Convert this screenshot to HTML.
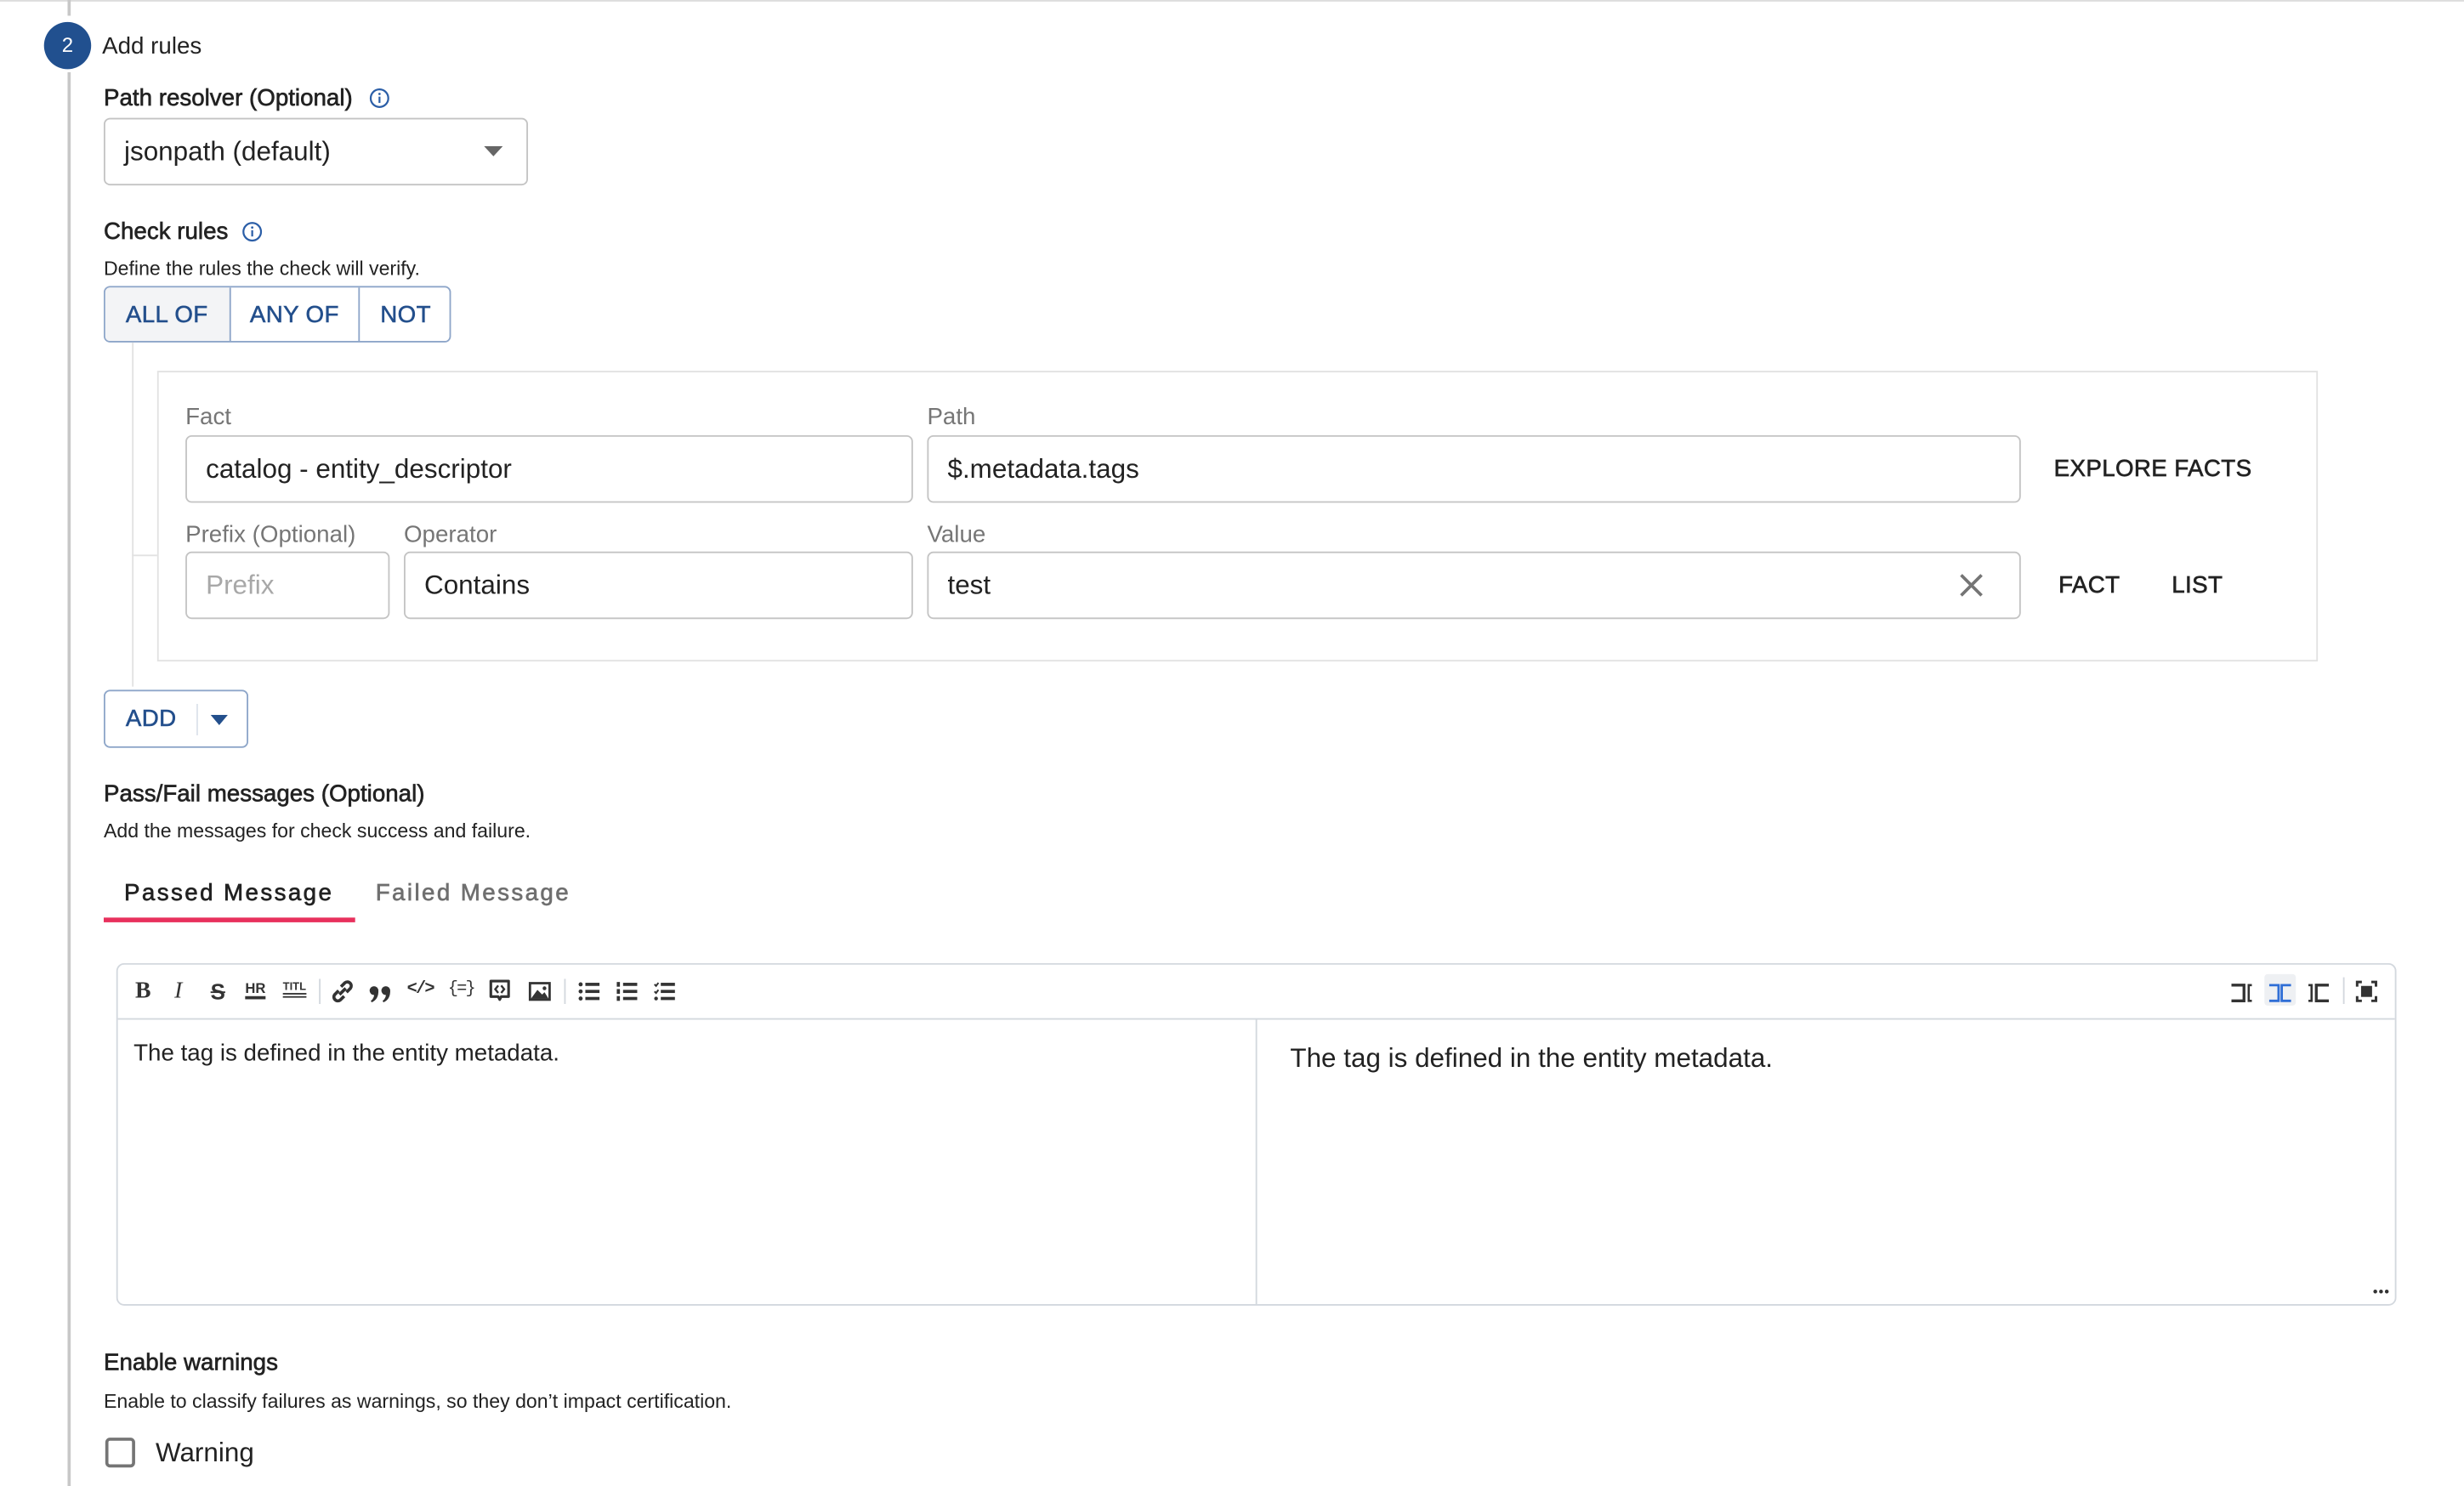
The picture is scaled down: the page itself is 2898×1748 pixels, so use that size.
<!DOCTYPE html>
<html><head><meta charset="utf-8">
<style>
html,body{margin:0;padding:0;background:#fff;overflow:hidden;width:2898px;height:1736px}
#w{position:absolute;left:0;top:0;width:1568px;height:940px;transform:scale(1.84821);transform-origin:0 0;font-family:"Liberation Sans",Arial,sans-serif;color:#1f1f1f}
.a{position:absolute;white-space:nowrap}
.t{height:20px;line-height:20px;margin-top:1px}
.h{font-size:15px;color:#222;-webkit-text-stroke:0.35px #222}
.s{font-size:12.5px;color:#222}
.lbl{font-size:15px;color:#767676}
.box{position:absolute;border:1px solid #c4c4c4;border-radius:4px;box-sizing:border-box;background:#fff}
.in{font-size:17px;color:#222;position:absolute;left:12px;top:50%;transform:translateY(-50%)}
.btn{position:absolute;font-size:15px;color:#222;height:20px;line-height:20px;letter-spacing:.2px;margin-top:1px;-webkit-text-stroke:0.35px #222}
.blue{color:#234f8c;-webkit-text-stroke:0.3px #234f8c}
.tb{position:absolute;top:623px;height:16px}
</style></head><body><div id="w">
<div class="a" style="left:0;top:0;width:1568px;height:1px;background:#dcdcdc"></div>
<div class="a" style="left:43px;top:0;width:1.5px;height:10px;background:#c8c8c8"></div>
<div class="a" style="left:43px;top:46px;width:1.5px;height:900px;background:#c8c8c8"></div>
<div class="a" style="left:28px;top:14px;width:30px;height:30px;border-radius:50%;background:#21508f;color:#fff;font-size:13px;line-height:30px;text-align:center">2</div>
<div class="a t" style="left:65px;top:19px;font-size:15px;color:#222">Add rules</div>

<div class="a t h" style="left:66px;top:52px">Path resolver (Optional)</div>
<svg class="a" style="left:235px;top:56px" width="13" height="13" viewBox="0 0 13 13"><circle cx="6.5" cy="6.5" r="5.6" fill="none" stroke="#2b5ea7" stroke-width="1.2"/><rect x="5.9" y="5.5" width="1.2" height="4" fill="#2b5ea7"/><circle cx="6.5" cy="3.8" r=".75" fill="#2b5ea7"/></svg>
<div class="box" style="left:66px;top:75px;width:270px;height:43px"><span class="in">jsonpath (default)</span>
<svg class="a" style="left:241px;top:17px" width="12" height="7"><path d="M0 0H12L6 6.5Z" fill="#666"/></svg></div>

<div class="a t h" style="left:66px;top:137px">Check rules</div>
<svg class="a" style="left:154px;top:141px" width="13" height="13" viewBox="0 0 13 13"><circle cx="6.5" cy="6.5" r="5.6" fill="none" stroke="#2b5ea7" stroke-width="1.2"/><rect x="5.9" y="5.5" width="1.2" height="4" fill="#2b5ea7"/><circle cx="6.5" cy="3.8" r=".75" fill="#2b5ea7"/></svg>
<div class="a t s" style="left:66px;top:160px">Define the rules the check will verify.</div>
<div class="box" style="left:66px;top:182px;width:221px;height:36px;border-color:#8ea6c9;overflow:hidden">
<div class="a" style="left:0;top:0;width:79px;height:36px;background:#f3f4f6;border-right:1px solid #8ea6c9"></div>
<div class="a" style="left:161px;top:0;width:1px;height:36px;background:#8ea6c9"></div>
<div class="btn blue" style="left:13px;top:7px">ALL OF</div>
<div class="btn blue" style="left:92px;top:7px">ANY OF</div>
<div class="btn blue" style="left:175px;top:7px">NOT</div>
</div>

<div class="a" style="left:84px;top:218px;width:1px;height:219px;background:#e2e2e2"></div>
<div class="a" style="left:84px;top:353px;width:16px;height:1px;background:#e2e2e2"></div>
<div class="a" style="left:100px;top:236px;width:1375px;height:185px;border:1px solid #e2e2e2;box-sizing:border-box"></div>

<div class="a t lbl" style="left:118px;top:255px">Fact</div>
<div class="box" style="left:118px;top:277px;width:463px;height:43px"><span class="in">catalog - entity_descriptor</span></div>
<div class="a t lbl" style="left:590px;top:255px">Path</div>
<div class="box" style="left:590px;top:277px;width:696px;height:43px"><span class="in">$.metadata.tags</span></div>
<div class="btn" style="left:1307px;top:288px">EXPLORE FACTS</div>

<div class="a t lbl" style="left:118px;top:330px">Prefix (Optional)</div>
<div class="box" style="left:118px;top:351px;width:130px;height:43px"><span class="in" style="color:#a8a8a8">Prefix</span></div>
<div class="a t lbl" style="left:257px;top:330px">Operator</div>
<div class="box" style="left:257px;top:351px;width:324px;height:43px"><span class="in">Contains</span></div>
<div class="a t lbl" style="left:590px;top:330px">Value</div>
<div class="box" style="left:590px;top:351px;width:696px;height:43px"><span class="in">test</span>
<svg class="a" style="left:656px;top:13px" width="15" height="15"><path d="M1 1L14 14M14 1L1 14" stroke="#757575" stroke-width="2"/></svg></div>
<div class="btn" style="left:1310px;top:362px">FACT</div>
<div class="btn" style="left:1382px;top:362px">LIST</div>

<div class="box" style="left:66px;top:439px;width:92px;height:37px;border-color:#8ea6c9">
<div class="btn blue" style="left:13px;top:7px">ADD</div>
<div class="a" style="left:58px;top:8px;width:1px;height:20px;background:#dde3ec"></div>
<svg class="a" style="left:67px;top:15px" width="11" height="7"><path d="M0 0H11L5.5 6.5Z" fill="#234f8c"/></svg>
</div>

<div class="a t h" style="left:66px;top:495px">Pass/Fail messages (Optional)</div>
<div class="a t s" style="left:66px;top:518px">Add the messages for check success and failure.</div>
<div class="a t" style="left:79px;top:558px;font-size:15px;letter-spacing:1.3px;color:#222;-webkit-text-stroke:0.35px #222">Passed Message</div>
<div class="a t" style="left:239px;top:558px;font-size:15px;letter-spacing:1.3px;color:#6f6f6f;-webkit-text-stroke:0.35px #6f6f6f">Failed Message</div>
<div class="a" style="left:66px;top:584px;width:160px;height:3px;background:#e8305d"></div>

<div class="a" style="left:74px;top:613px;width:1451px;height:218px;border:1px solid #d3d8de;border-radius:5px;box-sizing:border-box"></div>
<div class="a" style="left:75px;top:648px;width:1449px;height:1px;background:#d3d8de"></div>
<div class="a" style="left:799px;top:649px;width:1px;height:181px;background:#d3d8de"></div>
<div class="a t" style="left:85px;top:660px;font-size:15px;color:#222">The tag is defined in the entity metadata.</div>
<div class="a t" style="left:821px;top:663px;font-size:17px;color:#222">The tag is defined in the entity metadata.</div>
<div class="a" style="left:1510px;top:817px;font-size:9px;color:#333;letter-spacing:.5px">•••</div>

<!-- toolbar -->
<div class="a" style="left:86px;top:623px;font:bold 15px 'Liberation Serif',serif;color:#333">B</div>
<div class="a" style="left:111px;top:623px;font:italic 15px 'Liberation Serif',serif;color:#333">I</div>
<div class="a" style="left:134px;top:623px;font:bold 14px 'Liberation Sans',sans-serif;color:#333;text-decoration:line-through">S</div>
<div class="a" style="left:156px;top:625px;font:bold 9px 'Liberation Sans',sans-serif;color:#333;border-bottom:2px solid #333;line-height:9px">HR</div>
<div class="a" style="left:180px;top:625px;font:bold 7px 'Liberation Sans',sans-serif;color:#333;border-bottom:3px double #333;line-height:7px">TITL</div>
<div class="a" style="left:203px;top:623px;width:1px;height:16px;background:#d3d8de"></div>
<svg class="tb" style="left:211px" width="14" height="16" viewBox="0 0 14 16"><path d="M6 5L8.5 2.5a2.5 2.5 0 013.5 3.5L9.5 8.5M8 11L5.5 13.5A2.5 2.5 0 012 10L4.5 7.5M5 10L9 6" stroke="#333" stroke-width="2" fill="none"/></svg>
<svg class="tb" style="left:235px;top:625px" width="14" height="12" viewBox="0 0 14 12"><g fill="#333"><circle cx="3" cy="3.5" r="2.8"/><path d="M5.8 3.5Q6 9 1.5 11L1 10Q3.5 8 3 5Z"/><circle cx="10.5" cy="3.5" r="2.8"/><path d="M13.3 3.5Q13.5 9 9 11L8.5 10Q11 8 10.5 5Z"/></g></svg>
<div class="a" style="left:259px;top:624px;font:bold 11px 'Liberation Mono',monospace;color:#333;letter-spacing:-1px">&lt;/&gt;</div>
<div class="a" style="left:285px;top:624px;font:11px 'Liberation Mono',monospace;color:#333;letter-spacing:-1px">{=}</div>
<svg class="tb" style="left:310px" width="16" height="17" viewBox="0 0 16 17"><path d="M2 1.5H14V12H9L8 14L7 12H2Z" stroke="#333" stroke-width="1.8" fill="none" stroke-linejoin="round"/><path d="M7 4.5L5 7L7 9.5M9 4.5L11 7L9 9.5" stroke="#333" stroke-width="1.4" fill="none"/></svg>
<svg class="tb" style="left:336px" width="15" height="14" viewBox="0 0 15 14"><rect x="0.5" y="1" width="14" height="12" fill="#333"/><rect x="2" y="2.5" width="11" height="9" fill="#fff"/><path d="M2 11.5L6 6L9 9L10.5 7.5L13 11.5Z" fill="#333"/><circle cx="10.5" cy="5" r="1.2" fill="#333"/></svg>
<div class="a" style="left:359px;top:623px;width:1px;height:16px;background:#d3d8de"></div>
<svg class="tb" style="left:368px" width="14" height="14" viewBox="0 0 14 14"><g fill="#333"><circle cx="1.5" cy="2.5" r="1.3"/><circle cx="1.5" cy="7" r="1.3"/><circle cx="1.5" cy="11.5" r="1.3"/><rect x="4.5" y="1.5" width="9" height="2"/><rect x="4.5" y="6" width="9" height="2"/><rect x="4.5" y="10.5" width="9" height="2"/></g></svg>
<svg class="tb" style="left:392px" width="14" height="14" viewBox="0 0 14 14"><g fill="#333"><rect x="0.5" y="1" width="2" height="3"/><rect x="0.5" y="5.5" width="2" height="3"/><rect x="0.5" y="10" width="2" height="3"/><rect x="4.5" y="1.5" width="9" height="2"/><rect x="4.5" y="6" width="9" height="2"/><rect x="4.5" y="10.5" width="9" height="2"/></g></svg>
<svg class="tb" style="left:416px" width="14" height="14" viewBox="0 0 14 14"><path d="M0.5 2.5L1.5 3.5L3 1.5M0.5 7L1.5 8L3 6" stroke="#333" stroke-width="1.1" fill="none"/><g fill="#333"><circle cx="1.5" cy="11.5" r="1.2"/><rect x="4.5" y="1.5" width="9" height="2"/><rect x="4.5" y="6" width="9" height="2"/><rect x="4.5" y="10.5" width="9" height="2"/></g></svg>

<svg class="tb" style="left:1420px;top:624px" width="14" height="12" viewBox="0 0 14 12"><path d="M0 1H8V11H0" stroke="#333" stroke-width="1.8" fill="none"/><path d="M13 1H11V11H13" stroke="#333" stroke-width="1.4" fill="none"/></svg>
<div class="a" style="left:1441px;top:620px;width:20px;height:20px;background:#eef0f3;border-radius:2px"></div>
<svg class="tb" style="left:1444px;top:624px" width="14" height="12" viewBox="0 0 14 12"><path d="M0 1H6V11H0M14 1H8V11H14" stroke="#2f6ed6" stroke-width="1.5" fill="none"/></svg>
<svg class="tb" style="left:1468px;top:624px" width="14" height="12" viewBox="0 0 14 12"><path d="M1 1H3V11H1" stroke="#333" stroke-width="1.4" fill="none"/><path d="M14 1H6V11H14" stroke="#333" stroke-width="1.8" fill="none"/></svg>
<div class="a" style="left:1491px;top:622px;width:1px;height:17px;background:#d3d8de"></div>
<svg class="tb" style="left:1499px;top:623px" width="14" height="14" viewBox="0 0 14 14"><path d="M1 4V1H4M10 1H13V4M13 10V13H10M4 13H1V10" stroke="#333" stroke-width="1.6" fill="none"/><rect x="3.5" y="3.5" width="7" height="7" fill="#333"/></svg>

<div class="a t h" style="left:66px;top:857px">Enable warnings</div>
<div class="a t s" style="left:66px;top:881px">Enable to classify failures as warnings, so they don’t impact certification.</div>
<div class="a" style="left:67px;top:915px;width:19px;height:19px;border:2px solid #757575;border-radius:3px;box-sizing:border-box"></div>
<div class="a t" style="left:99px;top:914px;font-size:17px;color:#222">Warning</div>
</div></body></html>
